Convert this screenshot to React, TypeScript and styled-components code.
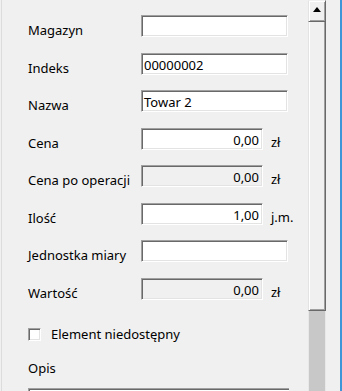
import styled, { createGlobalStyle } from "styled-components";

const GlobalStyle = createGlobalStyle`
  html, body {
    margin: 0;
    padding: 0;
    background: #f0f0f0;
  }
  body {
    font-family: "Noto Sans", "Open Sans", sans-serif;
    font-size: 13px;
    color: #000;
  }
`

type Field = {
    label: string
    value?: string
    unit?: string
    numeric?: boolean
    disabled?: boolean
}

const fields: Field[] = [
    {label: 'Magazyn'},
    {label: 'Indeks', value: '00000002'},
    {label: 'Nazwa', value: 'Towar 2'},
    {label: 'Cena', value: '0,00', unit: 'zł', numeric: true},
    {label: 'Cena po operacji', value: '0,00', unit: 'zł', numeric: true, disabled: true},
    {label: 'Ilość', value: '1,00', unit: 'j.m.', numeric: true},
    {label: 'Jednostka miary'},
    {label: 'Wartość', value: '0,00', unit: 'zł', numeric: true, disabled: true},
]

export default function App() {
    return (
        <>
            <GlobalStyle/>
            <Window>
                <Form>
                    {fields.map(f => (
                        <Row key={f.label}>
                            <Label>{f.label}</Label>
                            <Input $numeric={f.numeric} $disabled={f.disabled}>{f.value}</Input>
                            {f.unit && <Unit>{f.unit}</Unit>}
                        </Row>
                    ))}
                    <CheckRow>
                        <CheckBox/>
                        <CheckLabel>Element niedostępny</CheckLabel>
                    </CheckRow>
                    <Row $height={35.5}>
                        <Label>Opis</Label>
                    </Row>
                    <TextArea/>
                </Form>
                <ScrollBar>
                    <ArrowButton>
                        <svg width="8" height="5" viewBox="0 0 8 5">
                            <polygon points="0,5 8,5 4,0" fill="#000"/>
                        </svg>
                    </ArrowButton>
                    <Thumb/>
                    <Track/>
                </ScrollBar>
                <Gutter/>
            </Window>
        </>
    );
}

const Window = styled.div`
  display: flex;
  width: 342px;
  height: 391px;
  overflow: hidden;
  background: #f0f0f0;
  & > * {
    flex-shrink: 0;
  }
`
const Form = styled.div`
  box-sizing: border-box;
  width: 307px;
  margin-left: 1px;
  padding: 15px 0 0 26px;
  border-left: 1px solid #dcdcdc;
  overflow: hidden;
`
const Row = styled.div<{ $height?: number }>`
  display: flex;
  align-items: flex-start;
  height: ${({$height}) => $height ?? 37.5}px;
`
const Label = styled.div`
  width: 113px;
  padding-top: 7px;
  line-height: 16px;
  white-space: nowrap;
`
const Input = styled.div<{ $numeric?: boolean, $disabled?: boolean }>`
  box-sizing: border-box;
  width: ${({$numeric}) => $numeric ? 122 : 147}px;
  height: 22px;
  padding: 3px 3px 0 2px;
  line-height: 16px;
  text-align: ${({$numeric}) => $numeric ? 'right' : 'left'};
  background: ${({$disabled}) => $disabled ? '#f0f0f0' : '#fff'};
  border-top: 1px solid #a0a0a0;
  border-left: 1px solid #a0a0a0;
  border-right: 1px solid #fff;
  border-bottom: 1px solid #fff;
  box-shadow: inset 1px 1px 0 #696969, inset -1px -1px 0 #e3e3e3;
`
const Unit = styled.div`
  margin-left: 8px;
  padding-top: 6px;
  line-height: 16px;
`
const CheckRow = styled.div`
  display: flex;
  align-items: center;
  height: 37.5px;
  gap: 10px;
  padding-top: 1px;
  box-sizing: border-box;
`
const CheckBox = styled.div`
  box-sizing: border-box;
  width: 13px;
  height: 13px;
  background: #fff;
  border-top: 1px solid #a0a0a0;
  border-left: 1px solid #a0a0a0;
  border-right: 1px solid #fff;
  border-bottom: 1px solid #fff;
  box-shadow: inset 1px 1px 0 #696969, inset -1px -1px 0 #e3e3e3;
`
const CheckLabel = styled.div`
  line-height: 16px;
`
const TextArea = styled.div`
  box-sizing: border-box;
  width: 261px;
  height: 40px;
  background: #fff;
  border-top: 1px solid #a0a0a0;
  border-left: 1px solid #a0a0a0;
  box-shadow: inset 1px 1px 0 #696969;
`
const ScrollBar = styled.div`
  width: 18px;
  display: flex;
  flex-direction: column;
`
const ArrowButton = styled.div`
  box-sizing: border-box;
  height: 22px;
  display: flex;
  align-items: center;
  justify-content: center;
  padding-bottom: 3px;
  background: #f0f0f0;
  border-top: 1px solid #f0f0f0;
  border-left: 1px solid #e3e3e3;
  border-right: 1px solid #696969;
  border-bottom: 1px solid #696969;
  box-shadow: inset 1px 1px 0 #fff, inset -1px -1px 0 #a0a0a0;
`
const Thumb = styled.div`
  box-sizing: border-box;
  height: 289px;
  flex-shrink: 0;
  background: #f0f0f0;
  border-left: 1px solid #e3e3e3;
  border-right: 1px solid #696969;
  border-bottom: 1px solid #696969;
  box-shadow: inset 1px 0 0 #fff, inset -1px -1px 0 #a0a0a0;
`
const Track = styled.div`
  flex: 1;
  background: #c8c8c8;
  border-left: 1px solid #e8e8e8;
  border-right: 1px solid #e8e8e8;
`
const Gutter = styled.div`
  width: 14px;
  border-right: 2px solid #3c96d8;
`
